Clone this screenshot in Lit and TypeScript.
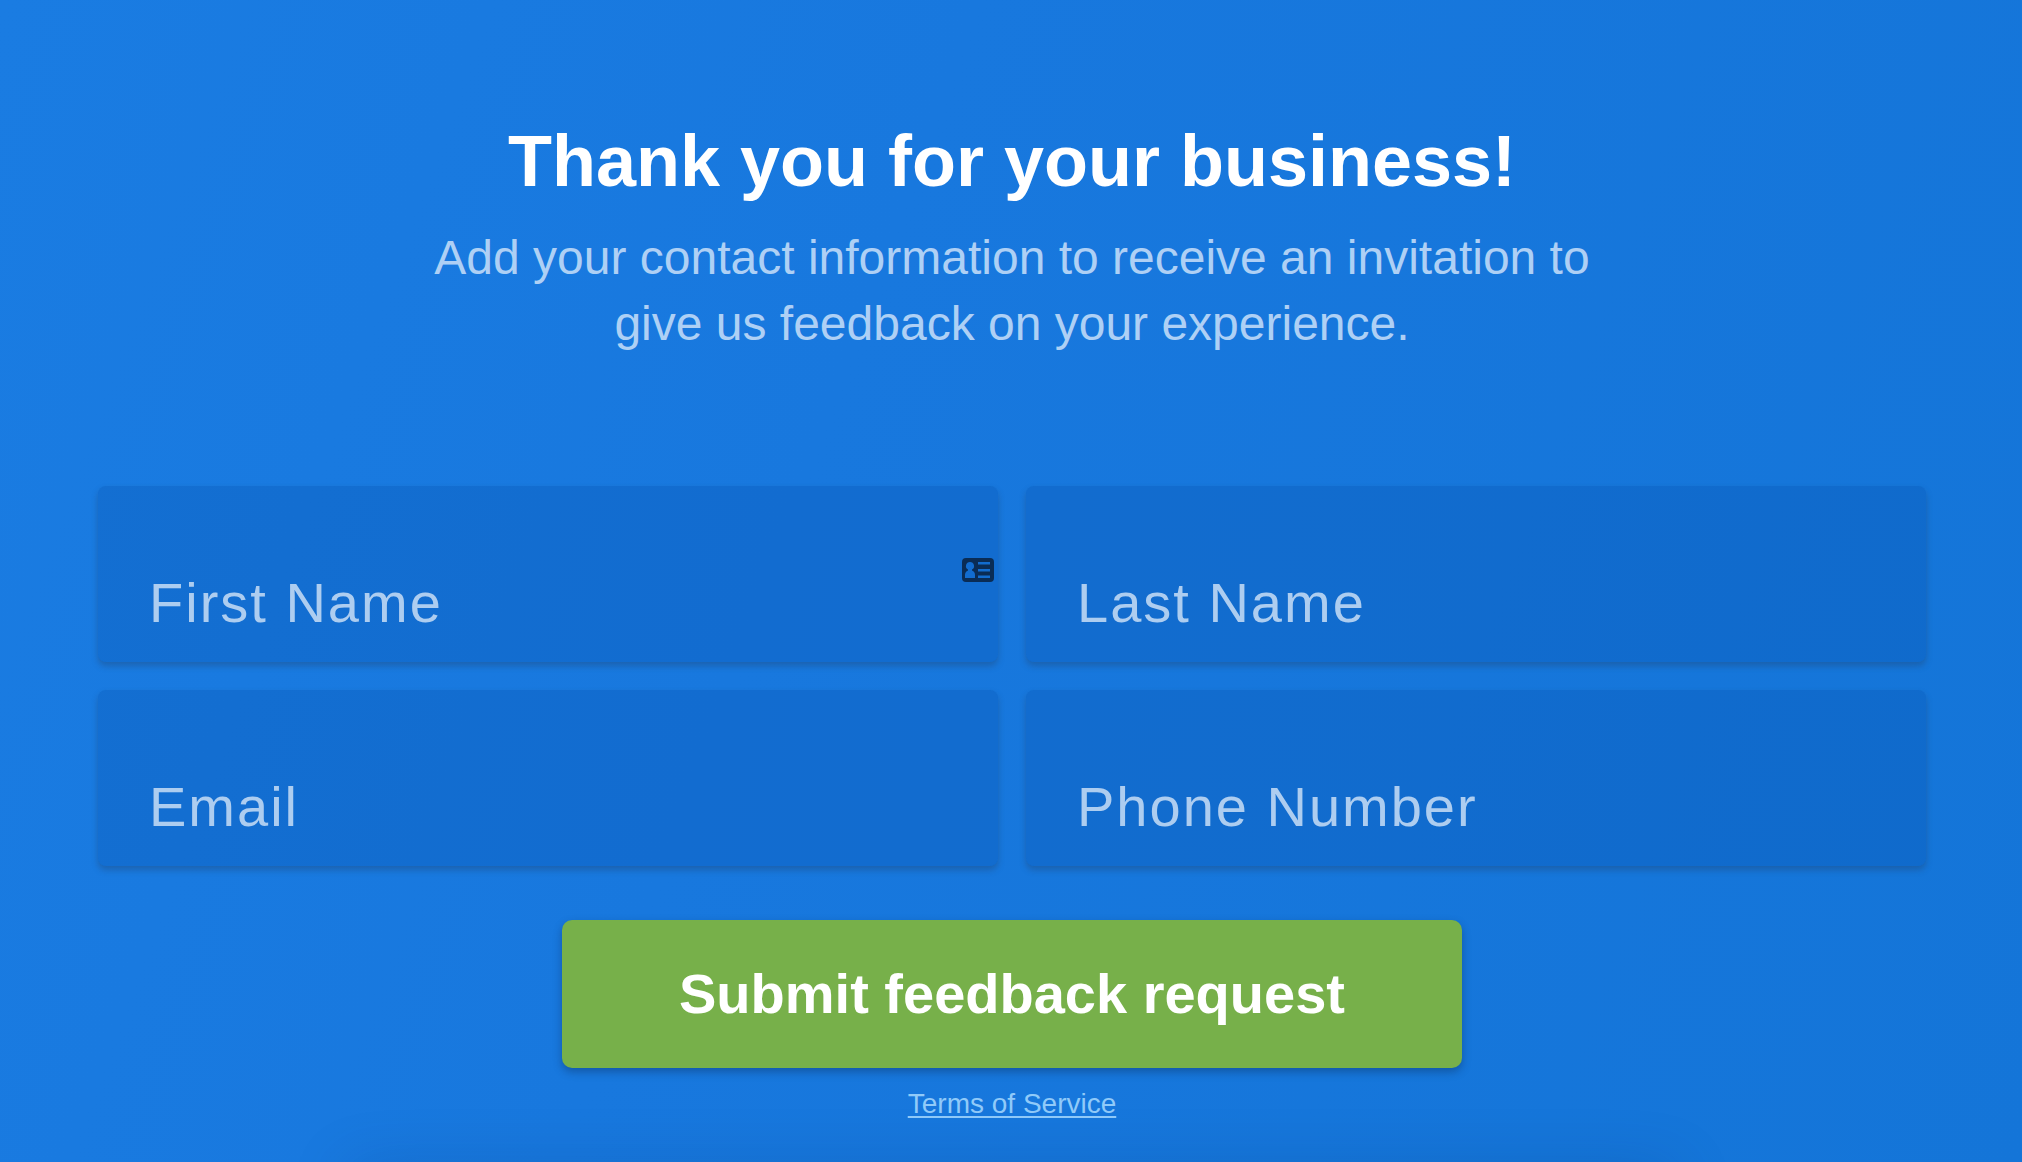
import { LitElement, html, css, svg, nothing } from "lit";
import { customElement } from "lit/decorators.js";

interface Field {
  id: string;
  label: string;
  type: string;
  autocomplete: string;
  card?: boolean;
}

const FIELDS: Field[] = [
  { id: "first-name", label: "First Name", type: "text", autocomplete: "given-name", card: true },
  { id: "last-name", label: "Last Name", type: "text", autocomplete: "family-name" },
  { id: "email", label: "Email", type: "email", autocomplete: "email" },
  { id: "phone", label: "Phone Number", type: "tel", autocomplete: "tel" },
];

// Contact card: a rounded plate with a person and three lines cut out of it.
const contactCard = svg`
  <path fill-rule="evenodd" d="M4 0H28Q32 0 32 4V20Q32 24 28 24H4Q0 24 0 20V4Q0 0 4 0Z
    M16 4V6.500H28V4Z M16 11V13.500H28V11Z M16 17.500V20H28V17.500Z
    M8 4A4 4 0 0 0 6 11.500V12.500Q3 13.500 3 17V20H13V17Q13 13.500 10 12.500V11.500A4 4 0 0 0 8 4Z" />
`;

@customElement("app-root")
export class AppRoot extends LitElement {
  static styles = css`
    :host {
      display: block;
      font-family: "Liberation Sans", Helvetica, Arial, sans-serif;
      color: #fff;
    }
    *,
    *::before,
    *::after {
      box-sizing: border-box;
    }
    .page {
      display: flex;
      flex-direction: column;
      min-height: 100vh;
      padding: 119px 96px 0 98px;
      overflow: hidden;
      background: linear-gradient(110deg, #1a7ce2 0%, #1878de 40%, #1475d8 100%);
    }
    .intro {
      text-align: center;
    }
    .title {
      margin: 0 0 22px;
      font-size: 72px;
      line-height: 84px;
      font-weight: 700;
    }
    .lead {
      max-width: 1200px;
      margin: 0 auto;
      font-size: 48px;
      line-height: 66px;
      color: #aed0f5;
    }
    .form {
      display: flex;
      flex-direction: column;
      align-items: center;
      padding-top: 129px;
    }
    .fields {
      display: grid;
      grid-template-columns: 1fr 1fr;
      gap: 28px;
      width: 100%;
    }
    .field {
      position: relative;
      display: grid;
      border-radius: 8px;
      background: rgba(8, 84, 176, 0.3);
      box-shadow: 0 4px 6px rgba(32, 68, 110, 0.4);
    }
    .label,
    .input {
      grid-area: 1 / 1;
      min-width: 0;
      padding: 84px 51px 26px;
      font: inherit;
      font-size: 56px;
      line-height: 66px;
      letter-spacing: 2px;
    }
    .label {
      color: #adcdf0;
      pointer-events: none;
    }
    .input {
      width: 100%;
      height: 100%;
      border: 0;
      border-radius: 8px;
      outline: none;
      background: transparent;
      color: #fff;
    }
    .input:focus {
      box-shadow: inset 0 0 0 3px #90caf9;
    }
    .input:focus + .label,
    .input:not(:placeholder-shown) + .label {
      padding-top: 24px;
      font-size: 28px;
      line-height: 32px;
    }
    .card {
      position: absolute;
      top: 72px;
      right: 4px;
      width: 32px;
      height: 24px;
      fill: #0a2c55;
    }
    .submit {
      width: calc(50% - 14px);
      margin: 54px 0 20px;
      padding: 42px 24px;
      border: 0;
      border-radius: 10px;
      background: #77b04a;
      box-shadow: 0 4px 8px rgba(14, 52, 100, 0.45);
      color: #fff;
      font: inherit;
      font-size: 56px;
      line-height: 64px;
      font-weight: 700;
      cursor: pointer;
    }
    .terms {
      font-size: 28px;
      line-height: 32px;
      color: #90caf9;
      text-decoration: underline;
      text-decoration-thickness: 2px;
      text-underline-offset: 3px;
    }
    .edge {
      width: 70%;
      height: 0;
      margin: auto auto 0;
      box-shadow: 0 30px 60px 20px rgba(10, 50, 110, 0.25);
    }
  `;

  private renderField(field: Field) {
    return html`
      <div class="field">
        <input
          class="input"
          id=${field.id}
          name=${field.id}
          type=${field.type}
          autocomplete=${field.autocomplete}
          placeholder=" "
        />
        <label class="label" for=${field.id}>${field.label}</label>
        ${field.card
          ? html`<svg class="card" viewBox="0 0 32 24" aria-hidden="true">${contactCard}</svg>`
          : nothing}
      </div>
    `;
  }

  render() {
    return html`
      <main class="page">
        <header class="intro">
          <h1 class="title">Thank you for your business!</h1>
          <p class="lead">
            Add your contact information to receive an invitation to give us feedback on your
            experience.
          </p>
        </header>
        <form class="form" @submit=${(e: Event) => e.preventDefault()}>
          <div class="fields">${FIELDS.map((f) => this.renderField(f))}</div>
          <button class="submit" type="submit">Submit feedback request</button>
          <a class="terms" href="#terms">Terms of Service</a>
        </form>
        <div class="edge"></div>
      </main>
    `;
  }
}
